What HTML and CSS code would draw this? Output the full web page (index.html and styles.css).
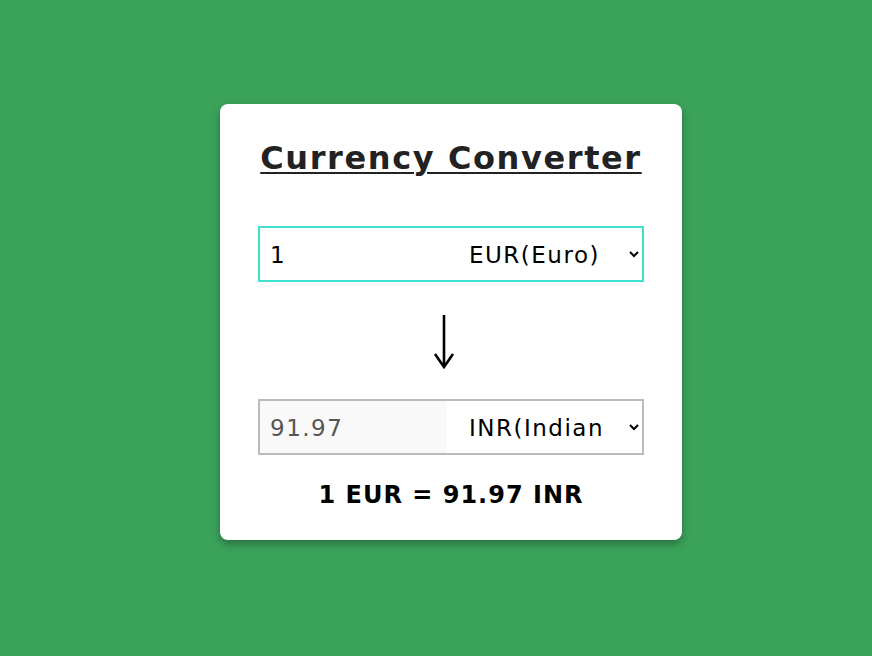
FILE: index.html
```html
<!DOCTYPE html>
<html>
<head>
<meta charset="utf-8">
<link rel="stylesheet" href="styles.css">
</head>
<body>
<div class="card">
  <h1 class="title">Currency Converter</h1>
  <div class="row row-from">
    <input class="amount" type="text" value="1">
    <select class="currency"><option>EUR(Euro)</option></select>
  </div>
  <svg class="arrow" width="22" height="54" viewBox="0 0 22 54" aria-label="to">
    <line x1="11" y1="0" x2="11" y2="51" stroke="#000" stroke-width="2.6"/>
    <polyline points="2,39 11,52 20,39" fill="none" stroke="#000" stroke-width="2.6" stroke-linejoin="miter"/>
  </svg>
  <div class="row row-to">
    <input class="amount readonly" type="text" value="91.97" readonly>
    <select class="currency clip"><option>INR(Indian Rupee)</option></select>
  </div>
  <p class="result">1 EUR = 91.97 INR</p>
</div>
</body>
</html>
```
FILE: styles.css
```css
html, body {
  margin: 0;
  height: 100%;
}
body {
  background: #3ba25a;
  font-family: "DejaVu Sans", Verdana, sans-serif;
  display: flex;
  justify-content: center;
  align-items: flex-start;
  padding-left: 30px;
  box-sizing: border-box;
}
.card {
  margin-top: 104px;
  width: 386px;
  padding: 0 38px;
  height: 436px;
  box-sizing: content-box;
  background: #fff;
  border-radius: 8px;
  box-shadow: 0 4px 8px rgba(0,0,0,0.3);
  display: flex;
  flex-direction: column;
  align-items: center;
}
.title {
  margin: 34px 0 0;
  font-size: 32px;
  font-weight: bold;
  letter-spacing: 1.6px;
  color: #222;
  text-decoration: underline;
  text-decoration-thickness: 2px;
  text-underline-offset: 3px;
  line-height: 40px;
}
.row {
  margin-top: 48px;
  width: 386px;
  height: 56px;
  box-sizing: border-box;
  display: flex;
  border: 2px solid #40e0d0;
}
.row-to {
  margin-top: 30px;
  border-color: #bbb;
}
.amount {
  flex: none;
  width: 187px;
  border: none;
  outline: none;
  padding: 2px 10px 0;
  font-family: inherit;
  font-size: 23px;
  letter-spacing: 1.5px;
  color: #000;
  background: #fff;
  box-sizing: border-box;
}
.amount.readonly {
  background: #f9f9f9;
  color: #555;
}
.currency {
  flex: none;
  width: 195px;
  min-width: 0;
  border: none;
  outline: none;
  background: #fff;
  font-family: inherit;
  font-size: 23px;
  letter-spacing: 1.5px;
  color: #000;
  padding: 2px 8px 0 18px;
  box-sizing: border-box;
}
.currency.clip {
  padding-right: 20px;
}
.arrow {
  display: block;
  margin-top: 33px;
  margin-left: -14px;
}
.result {
  margin: 26px 0 0;
  font-size: 24px;
  line-height: 28px;
  font-weight: bold;
  letter-spacing: 1px;
  color: #000;
}
```
